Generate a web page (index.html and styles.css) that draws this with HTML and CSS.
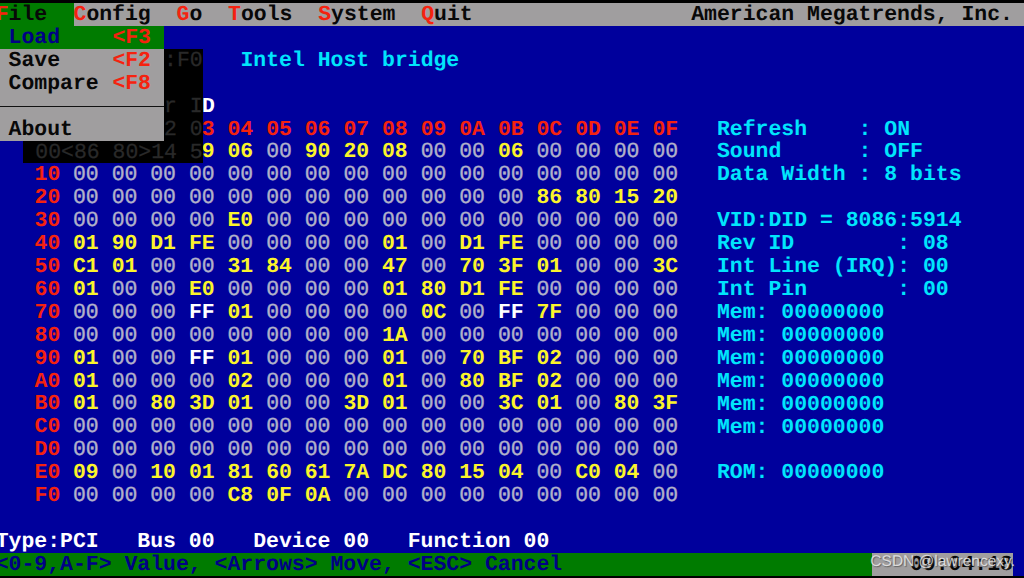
FILE: index.html
```html
<!DOCTYPE html>
<html lang="en">
<head>
<meta charset="utf-8">
<title>PCI Configuration</title>
<link rel="stylesheet" href="styles.css">
</head>
<body>
<div class="screen">
  <header class="menubar">
    <span class="item active w6"><b>F</b>ile</span>
    <span class="item w8"><b>C</b>onfig</span>
    <span class="item w4"><b>G</b>o</span>
    <span class="item w7"><b>T</b>ools</span>
    <span class="item w8"><b>S</b>ystem</span>
    <span class="item"><b>Q</b>uit</span>
    <span class="vendor">American Megatrends, Inc.</span>
  </header>
  <div class="title">Intel Host bridge</div>
  <div class="subtitle">D</div>
  <main class="main">
    <div class="dump" id="dump"></div>
    <pre class="info">Refresh    : ON
Sound      : OFF
Data Width : 8 bits

VID:DID = 8086:5914
Rev ID        : 08
Int Line (IRQ): 00
Int Pin       : 00
Mem: 00000000
Mem: 00000000
Mem: 00000000
Mem: 00000000
Mem: 00000000
Mem: 00000000

ROM: 00000000</pre>
  </main>
  <pre class="device">Type:PCI   Bus 00   Device 00   Function 00</pre>
  <footer class="status">
    <span class="keys">&lt;0-9,A-F&gt; Value, &lt;Arrows&gt; Move, &lt;ESC&gt; Cancel</span>
    <span class="clock">09:04:18</span>
  </footer>
  <pre class="shadow">           :F0

           r I
           2 0
 00&lt;86 80&gt;14 5</pre>
  <nav class="menu">
    <div class="entry selected"><span>Load</span><b>&lt;F3</b></div>
    <div class="entry"><span>Save</span><b>&lt;F2</b></div>
    <div class="entry"><span>Compare</span><b>&lt;F8</b></div>
    <div class="rule"></div>
    <div class="entry"><span>About</span></div>
  </nav>
  <div class="watermark">CSDN @lawrencexy.</div>
</div>
<script src="app.js"></script>
</body>
</html>
```
FILE: styles.css
```css
:root {
  --c: 12.88px;
  --r: 22.92px;
  --blue: #00009c;
  --grey: #a09e9f;
  --green: #007b00;
  --red: #f5220f;
  --cyan: #00e5fc;
}
* { box-sizing: border-box; }
body { margin: 0; background: #000; overflow: hidden; }
pre { margin: 0; font: inherit; }
.screen {
  position: relative;
  width: 1024px;
  height: 578px;
  overflow: hidden;
  border-top: 3px solid #000;
  border-bottom: 2px solid #000;
  background: var(--blue);
  font: bold 21.46px/22.92px "Liberation Mono", monospace;
  text-rendering: geometricPrecision;
  font-variant-ligatures: none;
  display: flex;
  flex-direction: column;
}
.menubar {
  display: flex;
  height: var(--r);
  flex: none;
  padding-top: 0;
  background: var(--grey);
  color: #080808;
}
.item, .vendor { flex: none; padding-top: 1px; }
.item:first-child { text-indent: -4.3px; }
.item b { color: var(--red); }
.active { background: var(--green); }
.w4 { width: calc(4 * var(--c)); }
.w7 { width: calc(7 * var(--c)); }
.w8 { width: calc(8 * var(--c)); }
.w6 { width: 73.5px; }
.vendor { margin-left: auto; margin-right: 11px; }
.title {
  height: calc(2 * var(--r));
  padding: 23.92px 0 0 240.4px;
  color: var(--cyan);
}
.subtitle {
  height: calc(2 * var(--r));
  padding: 23.92px 0 0 202px;
  color: #fff;
}
.main { display: flex; height: calc(17 * var(--r)); flex: none; }
.dump { width: 717px; flex: none; }
.line {
  display: grid;
  grid-template-columns: 73px repeat(16, calc(3 * var(--c)));
  height: var(--r);
  padding-top: 1px;
}
.line > :first-child { padding-left: 34.6px; }
.tail { padding-left: var(--c); }
.red { color: var(--red); }
.yellow { color: #fbf42b; }
.white { color: #fff; }
.zero {
  color: #b1b1ca;
  font-weight: normal;
  -webkit-text-stroke: .4px #b1b1ca;
}
.info { padding-top: 1px; color: var(--cyan); }
.device {
  height: calc(2 * var(--r));
  padding-top: 23.92px;
  margin-left: -4.3px;
  color: #fff;
}
.status {
  display: flex;
  flex: 1;
  margin-right: 11px;
  background: var(--green);
  color: #000086;
}
.keys { flex: none; width: 872px; padding-top: 1px; text-indent: -4.3px; }
.clock {
  flex: 1;
  padding: 1px 0 0 38px;
  background: var(--grey);
  color: #080808;
}
.shadow {
  position: absolute;
  left: 22.5px;
  top: 45.84px;
  width: 180.3px;
  height: calc(5 * var(--r));
  padding-top: 1px;
  background: #000;
  color: #292929;
  font-weight: normal;
  -webkit-text-stroke: .3px #292929;
  overflow: hidden;
}
.menu {
  position: absolute;
  left: 0;
  top: var(--r);
  width: 164px;
  height: calc(5 * var(--r));
  background: var(--grey);
  color: #080808;
}
.entry {
  display: flex;
  justify-content: space-between;
  height: var(--r);
  padding: 1px 13px 0 8.6px;
}
.entry b { color: var(--red); }
.selected { background: var(--green); color: #000086; }
.rule {
  height: var(--r);
  padding-top: 11px;
}
.rule::before {
  content: "";
  display: block;
  height: 1.5px;
  background: #111;
}
.watermark {
  position: absolute;
  right: 9px;
  bottom: 4px;
  font: 15.5px/20px "Liberation Sans", sans-serif;
  color: rgba(235, 235, 235, .85);
  text-shadow: 1px 1px 1px rgba(60, 60, 60, .6);
}
```
FILE: app.js
```js
// Configuration space bytes; "--" marks a byte covered by the open menu.
const rows = [
  "-- -- -- 59 06 00 90 20 08 00 00 06 00 00 00 00",
  "00 00 00 00 00 00 00 00 00 00 00 00 00 00 00 00",
  "00 00 00 00 00 00 00 00 00 00 00 00 86 80 15 20",
  "00 00 00 00 E0 00 00 00 00 00 00 00 00 00 00 00",
  "01 90 D1 FE 00 00 00 00 01 00 D1 FE 00 00 00 00",
  "C1 01 00 00 31 84 00 00 47 00 70 3F 01 00 00 3C",
  "01 00 00 E0 00 00 00 00 01 80 D1 FE 00 00 00 00",
  "00 00 00 FF 01 00 00 00 00 0C 00 FF 7F 00 00 00",
  "00 00 00 00 00 00 00 00 1A 00 00 00 00 00 00 00",
  "01 00 00 FF 01 00 00 00 01 00 70 BF 02 00 00 00",
  "01 00 00 00 02 00 00 00 01 00 80 BF 02 00 00 00",
  "01 00 80 3D 01 00 00 3D 01 00 00 3C 01 00 80 3F",
  "00 00 00 00 00 00 00 00 00 00 00 00 00 00 00 00",
  "00 00 00 00 00 00 00 00 00 00 00 00 00 00 00 00",
  "09 00 10 01 81 60 61 7A DC 80 15 04 00 C0 04 00",
  "00 00 00 00 C8 0F 0A 00 00 00 00 00 00 00 00 00"
];
const hex = "0123456789ABCDEF";
const dump = document.getElementById("dump");

function cell(line, text, cls) {
  const s = document.createElement("span");
  s.className = cls;
  s.textContent = text;
  line.append(s);
}
function addLine() {
  const line = document.createElement("div");
  line.className = "line";
  dump.append(line);
  return line;
}

const head = addLine();
cell(head, "", "");
for (let i = 0; i < 16; i++) {
  if (i < 3) cell(head, "", "");
  else if (i === 3) cell(head, "3", "red tail");
  else cell(head, "0" + hex[i], "red");
}
rows.forEach((row, r) => {
  const line = addLine();
  cell(line, r ? hex[r] + "0" : "", "red");
  row.split(" ").forEach((v, i) => {
    if (v === "--") cell(line, "", "");
    else if (r === 0 && i === 3) cell(line, v[1], "yellow tail");
    else cell(line, v, v === "00" ? "zero" : v === "FF" ? "white" : "yellow");
  });
});
```
